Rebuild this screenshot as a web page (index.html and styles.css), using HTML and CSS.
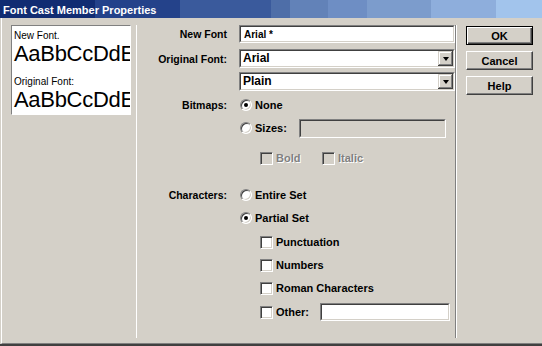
FILE: index.html
```html
<!DOCTYPE html>
<html>
<head>
<meta charset="utf-8">
<link rel="stylesheet" href="styles.css">
</head>
<body>
<div class="dialog">
  <div class="titlebar"><span class="title">Font Cast Member Properties</span></div>
  <div class="content">
    <div class="preview-col">
      <div class="preview">
        <div class="pv-caption first">New Font.</div>
        <div class="pv-sample">AaBbCcDdE</div>
        <div class="pv-caption second">Original Font:</div>
        <div class="pv-sample">AaBbCcDdE</div>
      </div>
    </div>
    <div class="sep sep-light"></div>
    <div class="form">
      <div class="row h18">
        <div class="lbl">New Font</div>
        <div class="field wide"><div class="field-in"><span class="field-text">Arial *</span></div></div>
      </div>
      <div class="row h19 mt6">
        <div class="lbl">Original Font:</div>
        <div class="select"><div class="select-in"><span class="select-text">Arial</span><span class="drop"><span class="tri"></span></span></div></div>
      </div>
      <div class="row h19 mt4">
        <div class="lbl"></div>
        <div class="select"><div class="select-in"><span class="select-text">Plain</span><span class="drop"><span class="tri"></span></span></div></div>
      </div>
      <div class="row h20 mt4">
        <div class="lbl">Bitmaps:</div>
        <div class="ctl"><span class="radio on"></span><span class="opt">None</span></div>
      </div>
      <div class="row h20 mt3">
        <div class="lbl"></div>
        <div class="ctl"><span class="radio"></span><span class="opt fixed">Sizes:</span><div class="field sizes disabled"><div class="field-in"></div></div></div>
      </div>
      <div class="row h20 mt10">
        <div class="lbl"></div>
        <div class="ctl indent">
          <div class="pair bold-pair"><span class="check disabled"></span><span class="opt dim">Bold</span></div>
          <div class="pair"><span class="check disabled"></span><span class="opt dim">Italic</span></div>
        </div>
      </div>
      <div class="row h20 mt17">
        <div class="lbl">Characters:</div>
        <div class="ctl"><span class="radio"></span><span class="opt">Entire Set</span></div>
      </div>
      <div class="row h20 mt3">
        <div class="lbl"></div>
        <div class="ctl"><span class="radio on"></span><span class="opt">Partial Set</span></div>
      </div>
      <div class="row h20 mt4">
        <div class="lbl"></div>
        <div class="ctl indent"><span class="check"></span><span class="opt">Punctuation</span></div>
      </div>
      <div class="row h20 mt3">
        <div class="lbl"></div>
        <div class="ctl indent"><span class="check"></span><span class="opt">Numbers</span></div>
      </div>
      <div class="row h20 mt3">
        <div class="lbl"></div>
        <div class="ctl indent"><span class="check"></span><span class="opt">Roman Characters</span></div>
      </div>
      <div class="row h20 mt4">
        <div class="lbl"></div>
        <div class="ctl indent"><span class="check"></span><span class="opt fixed">Other:</span><div class="field other"><div class="field-in"></div></div></div>
      </div>
    </div>
    <div class="sep sep-etched"></div>
    <div class="buttons">
      <button class="btn default">OK</button>
      <button class="btn">Cancel</button>
      <button class="btn">Help</button>
    </div>
  </div>
</div>
</body>
</html>
```

FILE: styles.css
```css
* { box-sizing: border-box; }
html, body { margin: 0; padding: 0; }
body {
  width: 542px;
  height: 346px;
  overflow: hidden;
  background: #d4d0c8;
  font-family: "Liberation Sans", Arial, sans-serif;
  color: #000;
}
.dialog {
  width: 542px;
  height: 346px;
  display: flex;
  flex-direction: column;
  border-bottom: 2px solid #404040;
}
.titlebar {
  height: 18px;
  flex: none;
  background: linear-gradient(to right,
    #112c72 0, #112c72 95px,
    #24428a 95px, #24428a 180px,
    #3a5a9c 180px, #3a5a9c 271px,
    #4e6ea8 271px, #4e6ea8 290px,
    #6282b8 290px, #6282b8 328px,
    #6e8ec4 328px, #6e8ec4 367px,
    #7c9ccc 367px, #7c9ccc 431px,
    #8eaedc 431px, #8eaedc 496px,
    #a2c4ec 496px, #a2c4ec 542px);
  padding-left: 3px;
}
.title {
  color: #fff;
  font-weight: bold;
  font-size: 11px;
  line-height: 18px;
  white-space: nowrap;
}
.content {
  flex: 1;
  display: flex;
  margin-left: 1px;
  border-left: 1px solid #fff;
  border-bottom: 1px solid #808080;
}
.preview-col {
  width: 134px;
  flex: none;
  padding: 7px 0 0 9px;
}
.preview {
  width: 120px;
  height: 90px;
  background: #fff;
  border: 1px solid;
  border-color: #808080 #fff #fff #808080;
  overflow: hidden;
  padding-left: 2px;
  white-space: nowrap;
}
.pv-caption {
  font-size: 10px;
  line-height: 12px;
  height: 12px;
}
.pv-caption.first { margin-top: 4px; }
.pv-caption.second { margin-top: 10px; }
.pv-sample {
  font-size: 22px;
  line-height: 24px;
  height: 24px;
  letter-spacing: -0.3px;
}
.sep {
  flex: none;
  align-self: flex-start;
  margin-top: 7px;
  height: 313px;
}
.sep-light { width: 1px; background: #fff; }
.sep-etched { width: 2px; border-left: 1px solid #808080; border-right: 1px solid #fff; }
.form {
  width: 318px;
  flex: none;
  padding-top: 7px;
  display: flex;
  flex-direction: column;
}
.row { display: flex; align-items: center; flex: none; }
.h18 { height: 18px; }
.h19 { height: 19px; }
.h20 { height: 20px; }
.mt3 { margin-top: 3px; }
.mt4 { margin-top: 4px; }
.mt6 { margin-top: 6px; }
.mt10 { margin-top: 10px; }
.mt17 { margin-top: 17px; }
.lbl {
  width: 90px;
  margin-right: 12px;
  flex: none;
  text-align: right;
  font-size: 10.5px;
  font-weight: bold;
  white-space: nowrap;
}
.ctl { display: flex; align-items: center; }
.ctl.indent { padding-left: 21px; }
.pair { display: flex; align-items: center; }
.bold-pair { width: 62px; }
.opt {
  font-size: 11px;
  font-weight: bold;
  margin-left: 3px;
  white-space: nowrap;
}
.opt.fixed { width: 44px; flex: none; }
.opt.dim { color: #808080; text-shadow: 1px 1px 0 #fff; }
.field {
  height: 18px;
  border: 1px solid;
  border-color: #808080 #fff #fff #808080;
  flex: none;
}
.field-in {
  height: 100%;
  border: 1px solid;
  border-color: #404040 #d4d0c8 #d4d0c8 #404040;
  background: #fff;
  display: flex;
  align-items: center;
}
.field.wide { width: 216px; }
.field.sizes { width: 147px; height: 19px; }
.field.other { width: 130px; }
.field.disabled .field-in { background: #d4d0c8; }
.field-text {
  font-size: 10px;
  font-weight: bold;
  padding-left: 3px;
}
.select {
  width: 216px;
  height: 19px;
  border: 1px solid;
  border-color: #808080 #fff #fff #808080;
}
.select-in {
  height: 100%;
  display: flex;
  border: 1px solid;
  border-color: #404040 #d4d0c8 #d4d0c8 #404040;
  background: #fff;
}
.select-text {
  flex: 1;
  font-size: 12px;
  font-weight: bold;
  line-height: 15px;
  padding-left: 2px;
}
.drop {
  width: 15px;
  height: 100%;
  background: #d4d0c8;
  box-shadow: inset -1px -1px #404040, inset 1px 1px #d4d0c8, inset -2px -2px #808080, inset 2px 2px #fff;
  display: flex;
  align-items: center;
  justify-content: center;
}
.tri {
  width: 0;
  height: 0;
  border-left: 3.5px solid transparent;
  border-right: 3.5px solid transparent;
  border-top: 4px solid #000;
}
.radio {
  width: 12px;
  height: 12px;
  flex: none;
  margin-left: 1px;
  border-radius: 50%;
  border: 1px solid;
  border-color: #808080 #fff #fff #808080;
  background: #fff;
  box-shadow: inset 1px 1px #404040, inset -1px -1px #d4d0c8;
  position: relative;
}
.radio.on::after {
  content: "";
  position: absolute;
  left: 3px;
  top: 3px;
  width: 4px;
  height: 4px;
  border-radius: 50%;
  background: #000;
}
.check {
  width: 13px;
  height: 13px;
  flex: none;
  border: 1px solid;
  border-color: #808080 #fff #fff #808080;
  background: #fff;
  box-shadow: inset 1px 1px #404040, inset -1px -1px #d4d0c8;
}
.check.disabled { background: #d4d0c8; }
.buttons {
  flex: 1;
  display: flex;
  flex-direction: column;
  gap: 6px;
  padding: 8px 0 0 9px;
}
.btn {
  width: 67px;
  height: 19px;
  padding: 0;
  margin: 0;
  font-family: "Liberation Sans", Arial, sans-serif;
  font-size: 11px;
  font-weight: bold;
  color: #000;
  background: #d4d0c8;
  border: 1px solid;
  border-color: #fff #404040 #404040 #fff;
  box-shadow: inset -1px -1px #808080;
}
.btn.default {
  border: 1px solid #000;
  box-shadow: inset 1px 1px #fff, inset -1px -1px #404040, inset -2px -2px #808080;
}
```
